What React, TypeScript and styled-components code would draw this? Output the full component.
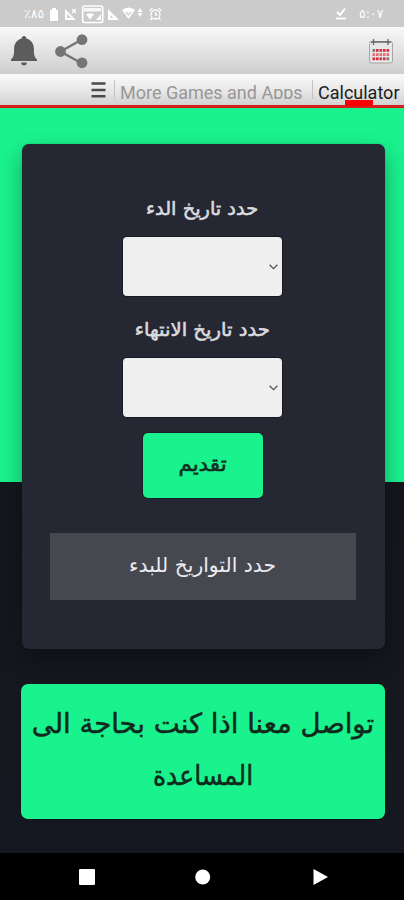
import React from "react";
import styled, { createGlobalStyle } from "styled-components";

const GlobalStyle = createGlobalStyle`
  * { box-sizing: border-box; }
  body { margin: 0; background: #000; }
`;

const Screen = styled.div`
  width: 404px;
  height: 900px;
  display: flex;
  flex-direction: column;
  overflow: hidden;
  font-family: "DejaVu Sans", sans-serif;
`;

const StatusBar = styled.header`
  height: 27px;
  flex: none;
  display: flex;
  align-items: center;
  justify-content: space-between;
  padding: 0 20px 0 24px;
  background: #cbcbcb;
  color: #fff;
`;

const StatusGroup = styled.div<{ $gap: number }>`
  display: flex;
  align-items: center;
  gap: ${(p) => p.$gap}px;
`;

const StatusText = styled.span<{ $width: number }>`
  width: ${(p) => p.$width}px;
  font-size: 12.5px;
  line-height: 14px;
  white-space: nowrap;
  direction: ltr;
`;

const Toolbar = styled.div`
  height: 47px;
  flex: none;
  display: flex;
  align-items: center;
  padding: 0 10px;
  background: linear-gradient(#f8f8f8, #e6e6e6 45%, #cdcdcd);
`;

const IconButton = styled.button<{ $push?: boolean; $gap?: number }>`
  display: flex;
  padding: 0;
  border: 0;
  background: none;
  margin-left: ${(p) => (p.$push ? "auto" : `${p.$gap ?? 0}px`)};
`;

const TabBar = styled.nav`
  height: 34px;
  flex: none;
  display: flex;
  align-items: flex-start;
  padding-left: 90px;
  background: linear-gradient(#fafafa, #e9e9e9 50%, #d2d2d2);
  border-bottom: 3px solid #d6201c;
`;

const Divider = styled.i`
  width: 1px;
  height: 19px;
  margin-top: 6px;
  background: #c3c3c3;
`;

const Tab = styled.a<{ $active?: boolean; $width: number }>`
  position: relative;
  width: ${(p) => p.$width}px;
  height: 25px;
  padding: 8px 0 0 5px;
  overflow: ${(p) => (p.$active ? "visible" : "hidden")};
  font: 18px/21px Roboto, sans-serif;
  white-space: nowrap;
  color: ${(p) => (p.$active ? "#1c1c1c" : "#979797")};
`;

const TabMarker = styled.i`
  position: absolute;
  left: 32px;
  top: 26px;
  width: 28px;
  height: 6px;
  background: #fb0000;
`;

const Page = styled.main`
  height: 745px;
  flex: none;
  display: flex;
  flex-direction: column;
  gap: 35px;
  padding: 36px 19px 0 21px;
  background: linear-gradient(#1af28d 374px, #14171c 374px, #161821);
`;

const Card = styled.form`
  height: 505px;
  width: 363px;
  margin-left: 1px;
  display: flex;
  flex-direction: column;
  align-items: center;
  padding: 43px 29px 0 27px;
  border-radius: 7px;
  background: #252732;
  box-shadow: 0 10px 22px rgba(0, 0, 0, 0.32), 0 0 1px rgba(10, 20, 25, 0.5);
`;

const Label = styled.label`
  height: 50px;
  font-size: 19px;
  line-height: 42px;
  color: #d9dade;
  -webkit-text-stroke: 0.6px #d9dade;
`;

const Fit = styled.span<{ $x: number }>`
  display: inline-block;
  white-space: nowrap;
  transform: scaleX(${(p) => p.$x});
`;

const DateSelect = styled.div`
  width: 159px;
  height: 59px;
  flex: none;
  display: flex;
  align-items: center;
  justify-content: flex-end;
  padding-right: 4px;
  margin-bottom: 12px;
  border-radius: 4px;
  background: #efefef;
  box-shadow: 0 0 0 1px #171922;
`;

const Submit = styled.button`
  width: 120px;
  height: 65px;
  flex: none;
  margin-top: 4px;
  padding: 0 0 3px;
  border: 0;
  border-radius: 5px;
  background: #1af28d;
  color: #12301f;
  font: 20px "DejaVu Sans", sans-serif;
  -webkit-text-stroke: 0.6px #12301f;
  box-shadow: 0 0 0 1px #1b1d2a;
`;

const Result = styled.output`
  width: 306px;
  height: 67px;
  flex: none;
  display: flex;
  align-items: center;
  justify-content: center;
  margin-top: 35px;
  padding-bottom: 4px;
  background: #464850;
  color: #ececf0;
  font-size: 20.3px;
`;

const Contact = styled.a`
  width: 364px;
  height: 135px;
  display: flex;
  flex-direction: column;
  align-items: center;
  padding-top: 13px;
  border-radius: 7px;
  background: #1af28d;
  box-shadow: 0 0 0 1px #10151a;
  color: #10291d;
  font-size: 27.5px;
  line-height: 52px;
  -webkit-text-stroke: 0.5px #10291d;
`;

const NavBar = styled.footer`
  height: 47px;
  flex: none;
  display: flex;
  align-items: center;
  padding-left: 79px;
  background: #000;
`;

const NavIcon = styled.svg<{ $gap: number }>`
  width: 16px;
  height: 16px;
  margin-left: ${(p) => p.$gap}px;
  fill: #fff;
`;

const Chevron = () => (
  <svg width="9" height="6" viewBox="0 0 9 6" fill="none" stroke="#555" strokeWidth="1.3">
    <path d="M.6.8 4.5 4.7 8.4.8" />
  </svg>
);

const StatusIcons = () => (
  <svg width="116" height="20" viewBox="48 4 116 20" fill="none" stroke="#fff" strokeWidth="1.3">
    <path d="M50 10h2V8h4v2h2v11h-8z" fill="#fff" stroke="none" />
    <path d="M65 9v11h11zM67 14v4h4z" fill="#fff" fillRule="evenodd" stroke="none" />
    <path d="m72 9 4 4m0-4-4 4" />
    <rect x="82.700" y="6" width="20" height="16.500" rx="2" strokeWidth="1.700" />
    <path d="M84 8h17v3.500H84z" fill="#fff" stroke="none" opacity=".85" />
    <path d="M86 14.500q4-2.500 8 0l-4 5zM101 14v6h-5z" fill="#fff" stroke="none" />
    <path d="M108 9v11h11zM110.500 15v3h3z" fill="#fff" fillRule="evenodd" stroke="none" />
    <path d="M122 10q6.500-5 13 0l-6.500 9z" fill="#fff" stroke="none" />
    <path d="m126 12 2.500 3 2.500-3" stroke="#cbcbcb" />
    <path d="m140 8 2.500 4h-5zM140 17l2.500-4h-5z" fill="#fff" stroke="none" />
    <circle cx="155.500" cy="14.500" r="4.500" />
    <path d="M155.500 12v3h2M149.500 11l3-3M161.500 11l-3-3M152 18l-1.500 2M159 18l1.500 2" />
  </svg>
);

const Check = () => (
  <svg width="12" height="13" viewBox="0 0 12 13" fill="none" stroke="#fff">
    <path d="m2 5 3 3 5-6.500" strokeWidth="2" />
    <path d="M1 11.500h10" strokeWidth="1.800" />
  </svg>
);

const Bell = () => (
  <svg width="28" height="32" viewBox="0 0 28 32" fill="#5c5c5c">
    <path d="M14 1c1.500 0 2.300 1 2.300 2.600 5 1.300 7.600 5.200 7.600 10.400 0 6 .4 8 3.100 10.500V26H1v-1.500C3.700 22 4.100 20 4.100 14c0-5.200 2.600-9.100 7.600-10.400C11.700 2 12.500 1 14 1z" />
    <path d="M11 27.500h6q-.5 3-3 3t-3-3z" />
  </svg>
);

const Share = () => (
  <svg width="34" height="36" viewBox="0 0 34 36" fill="#757575">
    <path d="M27 6.500 5.500 18.500l21.500 12" fill="none" stroke="#757575" strokeWidth="2.400" />
    <circle cx="27" cy="6.700" r="5.400" />
    <circle cx="5.500" cy="18.500" r="5.400" />
    <circle cx="27" cy="29.800" r="5.400" />
  </svg>
);

const Calendar = () => {
  const dots = Array.from({ length: 15 }, (_, i) => ({ c: i % 5, r: Math.floor(i / 5) }));
  return (
    <svg width="26" height="26" viewBox="0 0 26 26" fill="none">
      <rect x="1.500" y="3.500" width="23" height="21.500" rx="2" fill="#e7e7e7" stroke="#a5a5a5" />
      <path d="M3 4h20" stroke="#666" strokeWidth="1.500" />
      <path d="M5.500 1v6M20 1v6" stroke="#666" strokeWidth="1.300" />
      {dots.map(({ c, r }) => (
        <rect
          key={`${c}-${r}`}
          x={4.5 + c * 3.5}
          y={11 + r * 4.2}
          width="2.600"
          height="2.800"
          fill={(c === 0 && r === 0) || (c === 4 && r === 2) ? "#777" : r === 1 ? "#df7078" : "#d72e3e"}
        />
      ))}
    </svg>
  );
};

const Menu = () => (
  <svg width="17" height="17" viewBox="0 0 17 17" stroke="#4a4a4a" strokeWidth="2.500">
    <path d="M1.500 1.500h14M1.500 8h14M1.500 14.300h14" />
  </svg>
);

const MenuButton = styled.button`
  display: flex;
  width: 24px;
  padding: 8px 0 0;
  border: 0;
  background: none;
`;

export default function App() {
  return (
    <Screen>
      <GlobalStyle />
      <StatusBar>
        <StatusGroup $gap={1}>
          <StatusText $width={23}>٪٨٥</StatusText>
          <StatusIcons />
        </StatusGroup>
        <StatusGroup $gap={12}>
          <Check />
          <StatusText $width={25}>٥:٠٧</StatusText>
        </StatusGroup>
      </StatusBar>
      <Toolbar>
        <IconButton type="button"><Bell /></IconButton>
        <IconButton type="button" $gap={17}><Share /></IconButton>
        <IconButton type="button" $push><Calendar /></IconButton>
      </Toolbar>
      <TabBar>
        <MenuButton type="button"><Menu /></MenuButton>
        <Divider />
        <Tab $width={197}>More Games and Apps</Tab>
        <Divider />
        <Tab $width={91} $active>
          Calculator
          <TabMarker />
        </Tab>
      </TabBar>
      <Page dir="rtl">
        <Card>
          <Label><Fit $x={1.02}>حدد تاريخ الدء</Fit></Label>
          <DateSelect dir="ltr"><Chevron /></DateSelect>
          <Label><Fit $x={1.035}>حدد تاريخ الانتهاء</Fit></Label>
          <DateSelect dir="ltr"><Chevron /></DateSelect>
          <Submit type="button"><Fit $x={1.07}>تقديم</Fit></Submit>
          <Result><Fit $x={1}>حدد التواريخ للبدء</Fit></Result>
        </Card>
        <Contact>
          <Fit $x={1}>تواصل معنا اذا كنت بحاجة الى</Fit>
          <Fit $x={0.91}>المساعدة</Fit>
        </Contact>
      </Page>
      <NavBar>
        <NavIcon $gap={0}><rect width="16" height="16" rx="1" /></NavIcon>
        <NavIcon $gap={100}><circle cx="7.700" cy="8" r="7.500" /></NavIcon>
        <NavIcon $gap={102}><path d="M.5 0 15 8 .5 16z" /></NavIcon>
      </NavBar>
    </Screen>
  );
}
